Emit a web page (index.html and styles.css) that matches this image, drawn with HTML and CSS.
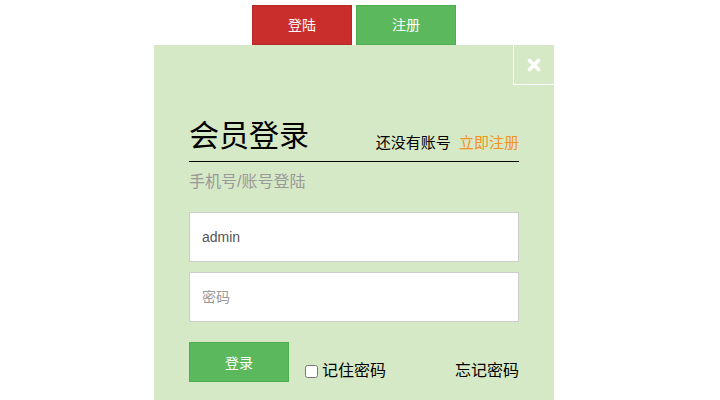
FILE: index.html
```html
<!DOCTYPE html>
<html lang="zh-CN">
<head>
<meta charset="utf-8">
<title>会员登录</title>
<link rel="stylesheet" href="styles.css">
</head>
<body>
<div class="wrap">
  <div class="tabs">
    <a class="tab tab-login">登陆</a>
    <a class="tab tab-reg">注册</a>
  </div>
  <div class="panel">
    <a class="close" aria-label="关闭">
      <svg width="14" height="14" viewBox="0 0 14 14"><path d="M2.5 2.5 L11.5 11.5 M11.5 2.5 L2.5 11.5" stroke="#fff" stroke-width="3.6" stroke-linecap="round"/></svg>
    </a>
    <div class="head">
      <h1 class="title">会员登录</h1>
      <div class="noacc">还没有账号 <a class="reglink">立即注册</a></div>
    </div>
    <div class="sub">手机号/账号登陆</div>
    <input class="field" type="text" value="admin">
    <input class="field field-pw" type="password" placeholder="密码">
    <div class="actions">
      <button class="btn-login">登录</button>
      <label class="remember"><input type="checkbox" class="chk"><span>记住密码</span></label>
      <a class="forgot">忘记密码</a>
    </div>
  </div>
</div>
</body>
</html>
```
FILE: styles.css
```css
html, body {
  margin: 0;
  padding: 0;
  background: #fff;
  height: 400px;
  overflow: hidden;
}
body {
  font-family: "Liberation Sans", "Noto Sans CJK SC", sans-serif;
  color: #000;
}
.wrap {
  width: 400px;
  margin-left: 154px;
}
.tabs {
  display: flex;
  justify-content: center;
  gap: 4px;
  padding-top: 5px;
}
.tab {
  display: block;
  width: 100px;
  height: 40px;
  text-align: center;
  color: #fff;
  font-size: 14px;
  box-sizing: border-box;
  line-height: 38px;
}
.tab-login {
  background: #c92e2c;
  border: 1px solid #b52a28;
}
.tab-reg {
  background: #5cb85c;
  border: 1px solid #4cae4c;
}
.panel {
  position: relative;
  background: #d6e9c6;
  height: 355px;
  padding: 71px 35px 0 35px;
  box-sizing: border-box;
}
.close {
  position: absolute;
  top: 0;
  right: 0;
  width: 40px;
  height: 39px;
  border-left: 1px solid #fff;
  border-bottom: 1px solid #fff;
  box-sizing: content-box;
  display: flex;
  align-items: center;
  justify-content: center;
}
.head {
  display: flex;
  align-items: flex-end;
  justify-content: space-between;
  border-bottom: 1px solid #000;
  padding-bottom: 5px;
}
.title {
  margin: 0;
  font-size: 30px;
  font-weight: normal;
  line-height: 40px;
}
.noacc {
  font-size: 15px;
  line-height: 20px;
  padding-bottom: 3px;
}
.reglink {
  color: #f2921f;
  margin-left: 4px;
}
.sub {
  margin-top: 10px;
  font-size: 16px;
  line-height: 20px;
  color: #999;
}
.field {
  display: block;
  width: 330px;
  height: 50px;
  box-sizing: border-box;
  margin: 20px 0 0 0;
  border: 1px solid #ccc;
  background: #fff;
  padding: 0 12px;
  font-family: "Liberation Sans", "Noto Sans CJK SC", sans-serif;
  font-size: 14px;
  color: #555;
  outline: none;
}
.field-pw {
  margin-top: 10px;
}
.field::placeholder {
  color: #999;
}
.actions {
  display: flex;
  align-items: flex-end;
  margin-top: 20px;
}
.btn-login {
  width: 100px;
  height: 40px;
  background: #5cb85c;
  border: 1px solid #4cae4c;
  color: #fff;
  font-family: "Liberation Sans", "Noto Sans CJK SC", sans-serif;
  font-size: 14px;
  padding: 0;
}
.remember {
  display: flex;
  align-items: center;
  margin-left: 16px;
  font-size: 16px;
  line-height: 20px;
  padding-bottom: 1px;
}
.chk {
  width: 13px;
  height: 13px;
  margin: 0 4px 0 0;
}
.forgot {
  margin-left: auto;
  font-size: 16px;
  line-height: 20px;
  padding-bottom: 1px;
}
```
